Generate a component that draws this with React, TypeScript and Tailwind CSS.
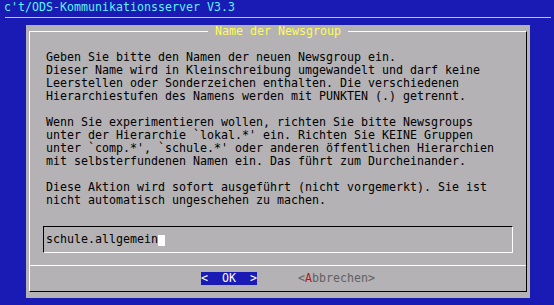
import React from "react";

const body: string[] = [
  "Geben Sie bitte den Namen der neuen Newsgroup ein.",
  "Dieser Name wird in Kleinschreibung umgewandelt und darf keine",
  "Leerstellen oder Sonderzeichen enthalten. Die verschiedenen",
  "Hierarchiestufen des Namens werden mit PUNKTEN (.) getrennt.",
  "",
  "Wenn Sie experimentieren wollen, richten Sie bitte Newsgroups",
  "unter der Hierarchie `lokal.*' ein. Richten Sie KEINE Gruppen",
  "unter `comp.*', `schule.*' oder anderen öffentlichen Hierarchien",
  "mit selbsterfundenen Namen ein. Das führt zum Durcheinander.",
  "",
  "Diese Aktion wird sofort ausgeführt (nicht vorgemerkt). Sie ist",
  "nicht automatisch ungeschehen zu machen.",
];

export default function App() {
  return (
    <div
      className="w-[554px] h-[305px] overflow-hidden bg-[#1a1ab4] text-[11.63px] leading-[13px]"
      style={{ fontFamily: '"DejaVu Sans Mono", "Liberation Mono", monospace' }}
    >
      <div className="pl-[4px] pt-[1px] h-[14px] text-[#5cf4f4] whitespace-pre">
        c't/ODS-Kommunikationsserver V3.3
      </div>
      <div className="mt-[3px] ml-[5px] mr-[3px] h-px bg-[#5cf4f4]" />
      <div className="mt-[7px] ml-[26px] w-[504px] h-[273px] bg-[#b4b2b4] pt-[6px] px-[3px] pb-[6px] flex">
        <div className="relative flex-1 flex flex-col border-t border-l border-t-white border-l-white border-r border-b border-r-black border-b-black">
          <div className="absolute top-[-7px] left-0 right-0 flex justify-center">
            <span className="bg-[#b4b2b4] text-[#fcfc54] whitespace-pre">
              {" Name der Newsgroup "}
            </span>
          </div>
          <div className="pt-[19px] pl-[16px] text-black whitespace-pre">
            {body.map((l, i) => (
              <div key={i} className="h-[13px]">
                {l}
              </div>
            ))}
          </div>
          <div className="mt-[19px] mx-[13px] h-[27px] border-t border-l border-t-black border-l-black border-r border-b border-r-white border-b-white flex items-start pt-[6px] pl-[2px]">
            <span className="text-black whitespace-pre">schule.allgemein</span>
            <span className="inline-block w-[7px] h-[11px] bg-white mt-[2px]" />
          </div>
          <div className="mt-[12px] h-px bg-white" />
          <div className="mt-[6px] flex items-start pl-[171px]">
            <div className="w-[56px] h-[13px] bg-[#1a1ab4] text-white whitespace-pre">
              {"<  OK  >"}
            </div>
            <div className="ml-[41px] h-[13px] text-[#626062] whitespace-pre">
              {"<"}
              <span className="text-[#b41818]">A</span>
              {"bbrechen>"}
            </div>
          </div>
        </div>
      </div>
    </div>
  );
}
